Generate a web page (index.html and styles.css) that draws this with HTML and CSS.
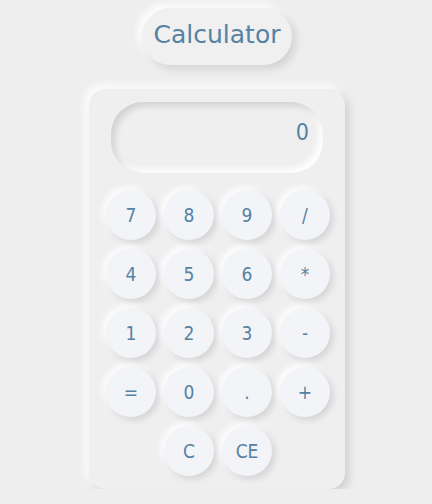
FILE: index.html
```html
<!DOCTYPE html>
<html>
<head>
<meta charset="utf-8">
<link rel="stylesheet" href="styles.css">
</head>
<body>
<h1 class="title">Calculator</h1>
<div class="calc">
  <div class="display">0</div>
  <div class="keys">
    <button class="key">7</button>
    <button class="key">8</button>
    <button class="key">9</button>
    <button class="key">/</button>
    <button class="key">4</button>
    <button class="key">5</button>
    <button class="key">6</button>
    <button class="key">*</button>
    <button class="key">1</button>
    <button class="key">2</button>
    <button class="key">3</button>
    <button class="key">-</button>
    <button class="key">=</button>
    <button class="key">0</button>
    <button class="key">.</button>
    <button class="key">+</button>
  </div>
  <div class="last-row">
    <button class="key">C</button>
    <button class="key">CE</button>
  </div>
</div>
</body>
</html>
```
FILE: styles.css
```css
html, body {
  margin: 0;
  padding: 0;
  background: #eeeeee;
}
body {
  display: flex;
  flex-direction: column;
  align-items: center;
  padding-top: 8px;
}
.title {
  margin: 0 0 0 2px;
  width: 150px;
  height: 57px;
  box-sizing: border-box;
  padding-bottom: 4px;
  border-radius: 29px;
  background: #f0f0f0;
  box-shadow: 4px 4px 9px rgba(0,0,0,0.12), -4px -4px 9px #ffffff;
  display: flex;
  align-items: center;
  justify-content: center;
  font-family: "DejaVu Sans", sans-serif;
  font-weight: 400;
  font-size: 25px;
  color: #5582a3;
}
.calc {
  margin: 24px 0 0 2px;
  width: 256px;
  box-sizing: border-box;
  padding: 13px 15px 13px 17px;
  border-radius: 16px;
  background: #efefef;
  box-shadow: 4px 4px 9px rgba(0,0,0,0.13), -4px -4px 9px #ffffff;
  display: flex;
  flex-direction: column;
  align-items: center;
}
.display {
  align-self: flex-start;
  margin-left: 5px;
  width: 212px;
  height: 71px;
  box-sizing: border-box;
  border-radius: 32px;
  background: #efefef;
  box-shadow: inset 4px 4px 6px rgba(0,0,0,0.12), inset -4px -4px 6px #ffffff;
  display: flex;
  align-items: center;
  justify-content: flex-end;
  padding: 0 14px 12px 0;
  font-family: "DejaVu Sans", sans-serif;
  font-stretch: condensed;
  font-size: 23px;
  color: #5582a3;
}
.keys {
  margin-top: 17px;
  display: grid;
  grid-template-columns: repeat(4, 50px);
  gap: 9px 8px;
}
.last-row {
  margin-top: 9px;
  display: flex;
  gap: 8px;
}
.key {
  width: 50px;
  height: 50px;
  border: none;
  border-radius: 50%;
  background: #f2f4f7;
  box-shadow: 3px 3px 7px rgba(0,0,0,0.12), -3px -3px 7px #ffffff;
  font-family: "DejaVu Sans", sans-serif;
  font-stretch: condensed;
  font-size: 19px;
  color: #5582a3;
  padding: 0;
}
```
